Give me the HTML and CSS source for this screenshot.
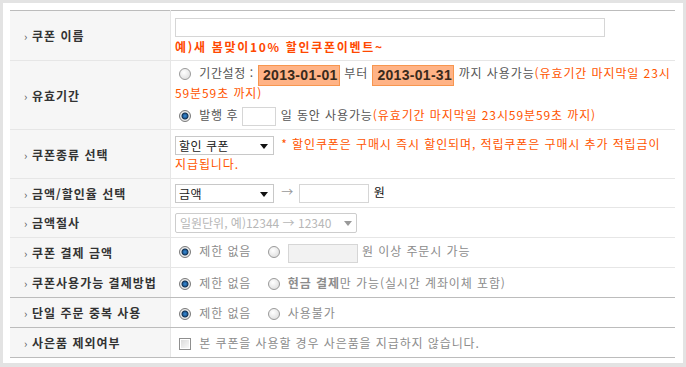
FILE: index.html
```html
<!DOCTYPE html>
<html lang="ko">
<head>
  <meta charset="UTF-8" />
  <title>쿠폰 등록</title>
  <link rel="stylesheet" href="styles.css">
</head>
<body>

  <div class="panel">
    <table class="form-table">
      <tr class="row-name">
        <th><span class="bullet">›</span>쿠폰 이름</th>
        <td>
          <input class="field field-wide" type="text">
          <p class="hint-strong">예)새 봄맞이10% 할인쿠폰이벤트~</p>
        </td>
      </tr>
      <tr class="row-period">
        <th><span class="bullet">›</span>유효기간</th>
        <td>
          <div class="line">
            <input class="radio" type="radio" name="period"> <span class="label-text">기간설정 :</span>
            <span class="date">2013-01-01</span> 부터 <span class="date">2013-01-31</span>
            까지 사용가능<span class="hint">(유효기간 마지막일 23시59분59초 까지)</span>
          </div>
          <div class="line line-second">
            <input class="radio" type="radio" name="period" checked> <span class="label-text">발행 후</span>
            <input class="field field-days" type="text"> 일 동안 사용가능<span class="hint">(유효기간 마지막일 23시59분59초 까지)</span>
          </div>
        </td>
      </tr>
      <tr class="row-type">
        <th><span class="bullet">›</span>쿠폰종류 선택</th>
        <td>
          <span class="select"><select><option>할인 쿠폰</option><option>적립 쿠폰</option></select></span>
          <span class="hint">* 할인쿠폰은 구매시 즉시 할인되며, 적립쿠폰은 구매시 추가 적립금이 지급됩니다.</span>
        </td>
      </tr>
      <tr class="row-amount">
        <th><span class="bullet">›</span>금액/할인율 선택</th>
        <td>
          <span class="select"><select><option>금액</option><option>할인율</option></select></span>
          <span class="arrow-to">→</span>
          <input class="field field-amount" type="text">
          <span class="unit">원</span>
        </td>
      </tr>
      <tr class="row-small">
        <th><span class="bullet">›</span>금액절사</th>
        <td>
          <span class="select select-disabled"><select disabled><option>일원단위, 예)12344 → 12340</option></select></span>
        </td>
      </tr>
      <tr class="row-small">
        <th><span class="bullet">›</span>쿠폰 결제 금액</th>
        <td class="muted">
          <input class="radio" type="radio" name="pay" checked> 제한 없음
          <input class="radio radio-gap" type="radio" name="pay">
          <input class="field field-amount field-off" type="text" disabled> 원 이상 주문시 가능
        </td>
      </tr>
      <tr class="row-small row-strong">
        <th><span class="bullet">›</span>쿠폰사용가능 결제방법</th>
        <td class="muted">
          <input class="radio" type="radio" name="method" checked> 제한 없음
          <input class="radio radio-gap" type="radio" name="method"> <b>현금 결제</b>만 가능(실시간 계좌이체 포함)
        </td>
      </tr>
      <tr class="row-small row-strong">
        <th><span class="bullet">›</span>단일 주문 중복 사용</th>
        <td class="muted">
          <input class="radio" type="radio" name="dup" checked> 제한 없음
          <input class="radio radio-gap" type="radio" name="dup"> 사용불가
        </td>
      </tr>
      <tr class="row-small row-strong">
        <th><span class="bullet">›</span>사은품 제외여부</th>
        <td class="muted">
          <input class="check" type="checkbox"> 본 쿠폰을 사용할 경우 사은품을 지급하지 않습니다.
        </td>
      </tr>
    </table>
  </div>

</body>
</html>
```

FILE: styles.css
```css
body {
  margin: 0;
  background: #e3e3e3;
  font-family: "Noto Sans CJK KR", "Noto Sans", sans-serif;
  font-size: 12px;
  color: #555;
}

.panel {
  margin: 3px;
  padding: 7px 8px 7px 7px;
  background: #fff;
  height: 346px;
}

.form-table {
  width: 665px;
  border-collapse: collapse;
  border-top: 1px solid #bcbcbc;
}

.form-table th,
.form-table td {
  border-bottom: 1px solid #e6e6e6;
  vertical-align: middle;
}

.form-table th {
  width: 146px;
  padding: 0 0 0 14px;
  background: #f6f6f6;
  border-right: 1px solid #e6e6e6;
  text-align: left;
  font-weight: bold;
  color: #333;
  white-space: nowrap;
  letter-spacing: 1px;
}

.form-table td {
  padding: 0 4px 0 4px;
  line-height: 18px;
  letter-spacing: 0.9px;
}

.row-strong th,
.row-strong td {
  border-bottom-color: #bcbcbc;
}

.bullet {
  display: inline-block;
  width: 8px;
  font-size: 11px;
  font-weight: normal;
  color: #555;
  letter-spacing: 0;
}

.row-name { height: 50px; }
.row-period { height: 69px; }
.row-type { height: 49px; }
.row-amount { height: 29px; }
.row-small { height: 30px; }

.row-name td { padding-top: 3px; }

.field {
  height: 19px;
  box-sizing: border-box;
  border: 1px solid #d6d6d6;
  padding: 0 3px;
  vertical-align: middle;
  font: inherit;
}

.field-wide { width: 430px; display: block; }
.field-days { width: 34px; }
.field-amount { width: 70px; }
.field-off { background: #f2f2f2; border-color: #d6d6d6; }

.hint-strong {
  margin: 1px 0 0;
  color: #ff4800;
  font-weight: bold;
  font-size: 12px;
  letter-spacing: 1.7px;
}

.hint {
  color: #ff5500;
}

.label-text {
  letter-spacing: 0.6px;
}

.line-second {
  margin-top: 4px;
}

.date {
  display: inline-block;
  width: 82px;
  height: 21px;
  line-height: 19px;
  margin: -2px 0;
  background: #ffb386;
  border: 1px solid #f7964f;
  font-family: "Liberation Sans", sans-serif;
  font-weight: bold;
  font-size: 14px;
  letter-spacing: 0.3px;
  color: #3a2a1c;
  padding-left: 4px;
  box-sizing: border-box;
  vertical-align: middle;
}

.radio {
  appearance: none;
  width: 12px;
  height: 12px;
  margin: 0 4px 0 4px;
  border: 1px solid #9a9a9a;
  border-radius: 50%;
  background: radial-gradient(circle at 40% 35%, #fff, #d8d8d8);
  vertical-align: -2px;
}

.radio:checked {
  background: radial-gradient(circle, #3b8fd8 0, #1f5e9c 2px, #14304d 3px, #f2f2f2 4px, #cfcfcf 6px);
  border-color: #7a7a7a;
}

.radio-gap {
  margin-left: 12px;
}

.check {
  appearance: none;
  width: 12px;
  height: 12px;
  margin: 0 4px 0 4px;
  border: 1px solid #8f8f8f;
  background: linear-gradient(135deg, #d8d8d8, #fbfbfb);
  box-shadow: inset 0 0 0 1px #fff;
  vertical-align: -2px;
}

.select {
  position: relative;
  display: inline-block;
  vertical-align: middle;
  letter-spacing: 0;
}

.select select {
  appearance: none;
  width: 99px;
  height: 19px;
  border: 1px solid #c8c8c8;
  background: #fff;
  padding: 0 3px;
  font: inherit;
  letter-spacing: 0.5px;
  color: #222;
}

.select::after {
  content: "";
  position: absolute;
  right: 6px;
  top: 8px;
  border-left: 4px solid transparent;
  border-right: 4px solid transparent;
  border-top: 5px solid #111;
  pointer-events: none;
}

.select-disabled select {
  width: 182px;
  height: 20px;
  border-color: #b8b8b8;
  border-radius: 2px;
  color: #999;
  padding-left: 4px;
  letter-spacing: 0;
}

.select-disabled::after {
  border-top-color: #999;
  right: 5px;
}

.row-type .select {
  margin-right: 3px;
}

.arrow-to {
  color: #999;
  margin: 0 1px 0 3px;
  letter-spacing: 0;
}

.unit {
  color: #111;
  margin-left: 1px;
}

.muted {
  color: #8c8c8c;
}

.muted b {
  color: #8c8c8c;
}
```
